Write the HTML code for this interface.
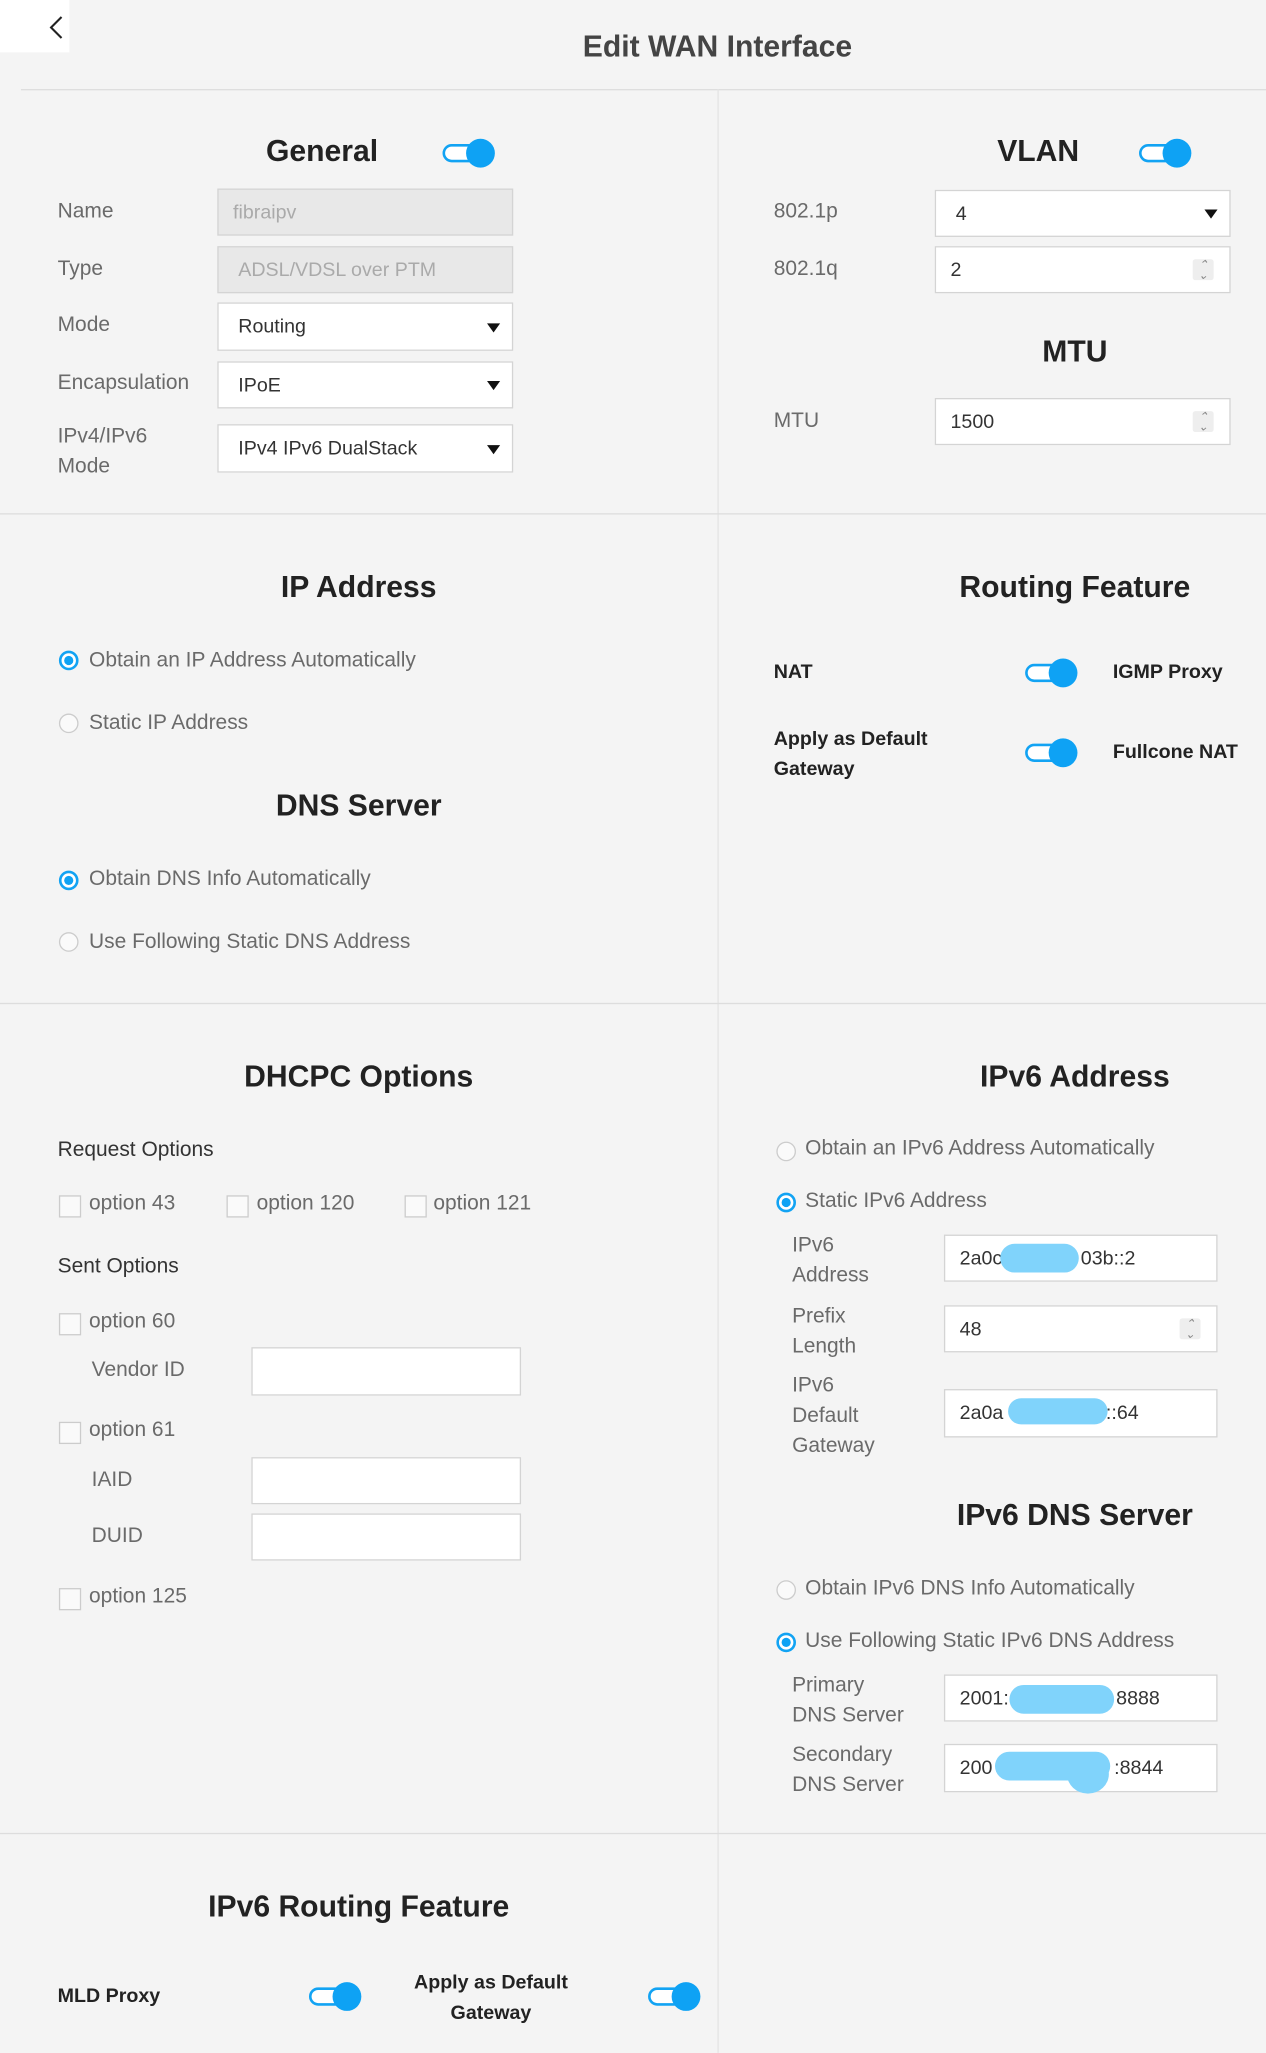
<!DOCTYPE html>
<html><head><meta charset="utf-8"><style>
html,body{margin:0;padding:0;width:1266px;height:2053px;overflow:hidden;background:#f4f4f4;font-family:"Liberation Sans",sans-serif;}
#w{position:absolute;left:0;top:0;width:967px;height:1568px;transform:scale(1.3092);transform-origin:0 0;}
.a{position:absolute;white-space:nowrap}
.l{color:#6a6a6a;font-size:16px}
.h{font-weight:bold;font-size:23px;color:#222;transform:translateX(-50%)}
.b{font-weight:bold;font-size:15px;color:#222}
.in{position:absolute;background:#fff;border:1px solid #d4d4d4;box-sizing:border-box;font-size:15px;color:#333;padding-left:15px;display:flex;align-items:center}
.dis{background:#e8e8e8;color:#aaa}
.arr{position:absolute;right:9px;top:50%;margin-top:-3px;width:0;height:0;border-left:5px solid transparent;border-right:5px solid transparent;border-top:7px solid #111}
.sp{position:absolute;right:12px;top:50%;margin-top:-8px;width:16px;height:16px;background:#eee;border-radius:2px;font-size:9px;line-height:8px;text-align:center;color:#888}
.hl{position:absolute;height:1px;background:#ddd}
.vl{position:absolute;width:1px;background:#e4e4e4}
.tg{position:absolute;width:36px;height:14px;border:2px solid #12a3f3;border-radius:9px;background:#fff;box-sizing:border-box}
.tg:after{content:"";position:absolute;right:-6px;top:-6px;width:22px;height:22px;border-radius:50%;background:#0ea2f4}
.r{position:absolute;width:15px;height:15px;border-radius:50%;border:1px solid #ccc;background:#fafafa;box-sizing:border-box}
.r.on{border:2px solid #12a3f3;background:#fff}
.r.on:after{content:"";position:absolute;left:2px;top:2px;width:7px;height:7px;border-radius:50%;background:#0ea2f4}
.c{position:absolute;width:17px;height:17px;border:1px solid #ccc;background:#fafafa;box-sizing:border-box}
.bl{position:absolute;background:#80d3fb;border-radius:20px}
</style></head><body><div id="w">
<div class="a" style="left:0;top:0;width:53px;height:40px;background:#fff"></div>
<svg class="a" style="left:36px;top:11px" width="14" height="20"><path d="M11 2 L3 10 L11 18" fill="none" stroke="#222" stroke-width="1.6"/></svg>
<div class="a" style="left:548px;top:22px;font-size:23px;font-weight:bold;color:#444;transform:translateX(-50%)">Edit WAN Interface</div>
<div class="hl" style="left:16px;top:68px;width:951px"></div>
<div class="vl" style="left:548px;top:68px;height:1500px"></div>
<div class="hl" style="left:0;top:392px;width:967px"></div>
<div class="hl" style="left:0;top:766px;width:967px"></div>
<div class="hl" style="left:0;top:1400px;width:967px"></div>

<div class="a h" style="left:246px;top:102px">General</div>
<div class="tg" style="left:338px;top:110px"></div>
<div class="a l" style="left:44px;top:153px">Name</div>
<div class="in dis" style="left:166px;top:144px;width:226px;height:36px;padding-left:11px">fibraipv</div>
<div class="a l" style="left:44px;top:197px">Type</div>
<div class="in dis" style="left:166px;top:188px;width:226px;height:36px">ADSL/VDSL over PTM</div>
<div class="a l" style="left:44px;top:240px">Mode</div>
<div class="in" style="left:166px;top:231px;width:226px;height:37px">Routing<i class="arr"></i></div>
<div class="a l" style="left:44px;top:284px">Encapsulation</div>
<div class="in" style="left:166px;top:276px;width:226px;height:36px">IPoE<i class="arr"></i></div>
<div class="a l" style="left:44px;top:322px;line-height:23px">IPv4/IPv6<br>Mode</div>
<div class="in" style="left:166px;top:324px;width:226px;height:37px">IPv4 IPv6 DualStack<i class="arr"></i></div>

<div class="a h" style="left:793px;top:102px">VLAN</div>
<div class="tg" style="left:870px;top:110px"></div>
<div class="a l" style="left:591px;top:153px">802.1p</div>
<div class="in" style="left:714px;top:145px;width:226px;height:36px;padding-left:15px">4<i class="arr"></i></div>
<div class="a l" style="left:591px;top:197px">802.1q</div>
<div class="in" style="left:714px;top:188px;width:226px;height:36px;padding-left:11px">2<i class="sp">⌃<br>⌄</i></div>
<div class="a h" style="left:821px;top:255px">MTU</div>
<div class="a l" style="left:591px;top:313px">MTU</div>
<div class="in" style="left:714px;top:304px;width:226px;height:36px;padding-left:11px">1500<i class="sp">⌃<br>⌄</i></div>

<div class="a h" style="left:274px;top:435px">IP Address</div>
<div class="r on" style="left:45px;top:497px"></div>
<div class="a l" style="left:68px;top:496px">Obtain an IP Address Automatically</div>
<div class="r" style="left:45px;top:545px"></div>
<div class="a l" style="left:68px;top:544px">Static IP Address</div>
<div class="a h" style="left:274px;top:602px">DNS Server</div>
<div class="r on" style="left:45px;top:665px"></div>
<div class="a l" style="left:68px;top:663px">Obtain DNS Info Automatically</div>
<div class="r" style="left:45px;top:712px"></div>
<div class="a l" style="left:68px;top:711px">Use Following Static DNS Address</div>

<div class="a h" style="left:821px;top:435px">Routing Feature</div>
<div class="a b" style="left:591px;top:505px">NAT</div>
<div class="tg" style="left:783px;top:507px"></div>
<div class="a b" style="left:850px;top:505px">IGMP Proxy</div>
<div class="a b" style="left:591px;top:553px;line-height:23px">Apply as Default<br>Gateway</div>
<div class="tg" style="left:783px;top:568px"></div>
<div class="a b" style="left:850px;top:566px">Fullcone NAT</div>

<div class="a h" style="left:274px;top:809px">DHCPC Options</div>
<div class="a l" style="left:44px;top:870px;color:#333">Request Options</div>
<div class="c" style="left:45px;top:913px"></div><div class="a l" style="left:68px;top:911px">option 43</div>
<div class="c" style="left:173px;top:913px"></div><div class="a l" style="left:196px;top:911px">option 120</div>
<div class="c" style="left:309px;top:913px"></div><div class="a l" style="left:331px;top:911px">option 121</div>
<div class="a l" style="left:44px;top:959px;color:#333">Sent Options</div>
<div class="c" style="left:45px;top:1003px"></div><div class="a l" style="left:68px;top:1001px">option 60</div>
<div class="a l" style="left:70px;top:1038px">Vendor ID</div>
<div class="in" style="left:192px;top:1029px;width:206px;height:37px"></div>
<div class="c" style="left:45px;top:1086px"></div><div class="a l" style="left:68px;top:1084px">option 61</div>
<div class="a l" style="left:70px;top:1122px">IAID</div>
<div class="in" style="left:192px;top:1113px;width:206px;height:36px"></div>
<div class="a l" style="left:70px;top:1165px">DUID</div>
<div class="in" style="left:192px;top:1156px;width:206px;height:36px"></div>
<div class="c" style="left:45px;top:1213px"></div><div class="a l" style="left:68px;top:1211px">option 125</div>

<div class="a h" style="left:821px;top:809px">IPv6 Address</div>
<div class="r" style="left:593px;top:872px"></div>
<div class="a l" style="left:615px;top:869px">Obtain an IPv6 Address Automatically</div>
<div class="r on" style="left:593px;top:911px"></div>
<div class="a l" style="left:615px;top:909px">Static IPv6 Address</div>
<div class="a l" style="left:605px;top:940px;line-height:23px">IPv6<br>Address</div>
<div class="in" style="left:721px;top:943px;width:209px;height:36px;padding-left:11px">2a0c<span style="margin-left:60px">03b::2</span></div>
<div class="bl" style="left:764px;top:950px;width:60px;height:22px"></div>
<div class="a l" style="left:605px;top:994px;line-height:23px">Prefix<br>Length</div>
<div class="in" style="left:721px;top:997px;width:209px;height:36px;padding-left:11px">48<i class="sp">⌃<br>⌄</i></div>
<div class="a l" style="left:605px;top:1047px;line-height:23px">IPv6<br>Default<br>Gateway</div>
<div class="in" style="left:721px;top:1061px;width:209px;height:37px;padding-left:11px">2a0a<span style="margin-left:70px">b::64</span></div>
<div class="bl" style="left:770px;top:1068px;width:76px;height:20px"></div>
<div class="a h" style="left:821px;top:1144px">IPv6 DNS Server</div>
<div class="r" style="left:593px;top:1207px"></div>
<div class="a l" style="left:615px;top:1205px">Obtain IPv6 DNS Info Automatically</div>
<div class="r on" style="left:593px;top:1247px"></div>
<div class="a l" style="left:615px;top:1245px">Use Following Static IPv6 DNS Address</div>
<div class="a l" style="left:605px;top:1276px;line-height:23px">Primary<br>DNS Server</div>
<div class="in" style="left:721px;top:1279px;width:209px;height:36px;padding-left:11px">2001:<span style="margin-left:82px">8888</span></div>
<div class="bl" style="left:771px;top:1287px;width:80px;height:22px"></div>
<div class="a l" style="left:605px;top:1329px;line-height:23px">Secondary<br>DNS Server</div>
<div class="in" style="left:721px;top:1332px;width:209px;height:37px;padding-left:11px">200<span style="margin-left:93px">:8844</span></div>
<div class="bl" style="left:760px;top:1338px;width:88px;height:22px"></div>
<div class="bl" style="left:815px;top:1340px;width:32px;height:30px;border-radius:50%"></div>

<div class="a h" style="left:274px;top:1443px">IPv6 Routing Feature</div>
<div class="a b" style="left:44px;top:1516px">MLD Proxy</div>
<div class="tg" style="left:236px;top:1518px"></div>
<div class="a b" style="left:375px;top:1503px;line-height:23px;text-align:center;transform:translateX(-50%)">Apply as Default<br>Gateway</div>
<div class="tg" style="left:495px;top:1518px"></div>
</div></body></html>
